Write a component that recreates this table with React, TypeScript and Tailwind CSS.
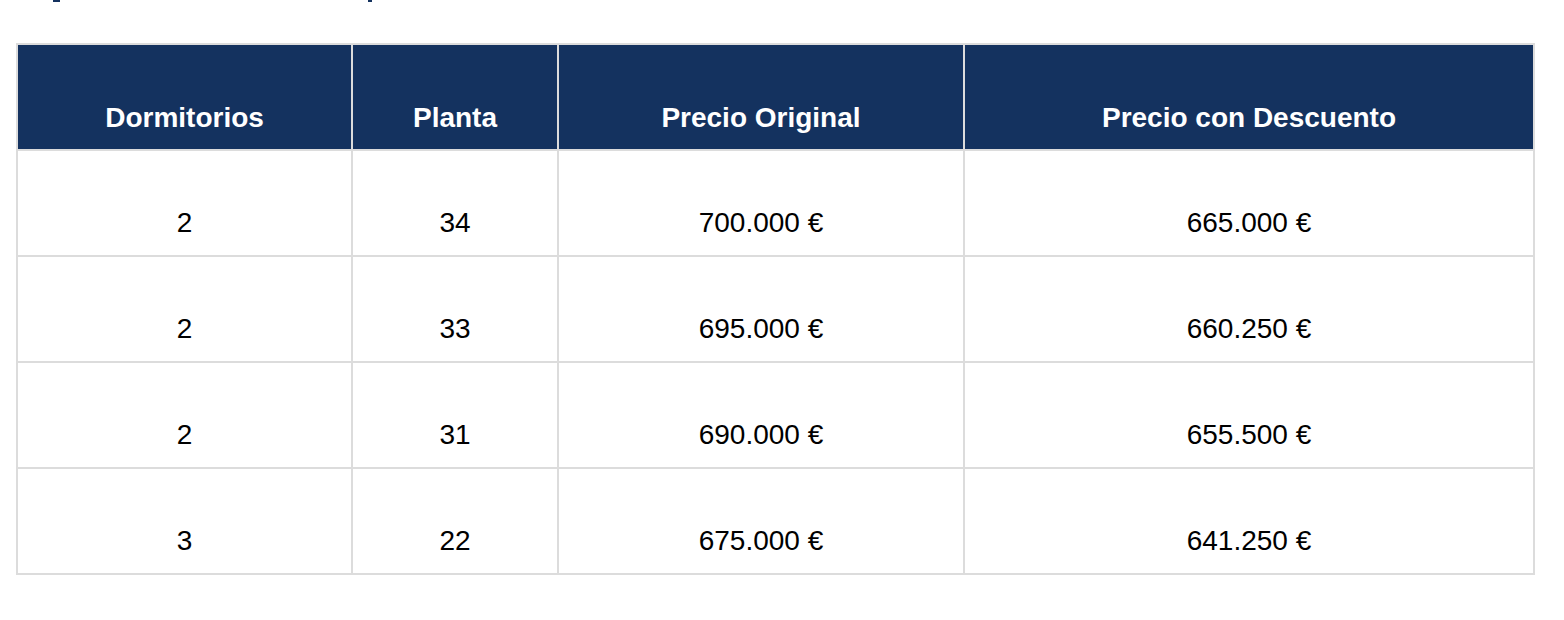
import React from "react";

const rows = [
  ["2", "34", "700.000 €", "665.000 €"],
  ["2", "33", "695.000 €", "660.250 €"],
  ["2", "31", "690.000 €", "655.500 €"],
  ["3", "22", "675.000 €", "641.250 €"],
];

const headers = ["Dormitorios", "Planta", "Precio Original", "Precio con Descuento"];

export default function App() {
  return (
    <div
      className="w-[1564px] h-[620px] bg-white overflow-hidden"
      style={{ fontFamily: '"Liberation Sans", Arial, sans-serif' }}
    >
      <div className="flex h-[2px]">
        <div className="ml-[53px] w-[7px] h-[2px] bg-[#14325f]" />
        <div className="ml-[308px] w-[4px] h-[2px] bg-[#14325f]" />
      </div>
      <div className="ml-[16px] mt-[41px] w-[1519px] bg-[#dcdcdc] p-[2px] grid grid-cols-[333px_204px_404px_568px] gap-[2px]">
        {headers.map((h) => (
          <div
            key={h}
            className="h-[104px] bg-[#14325f] flex items-end justify-center pb-[15px] text-white font-bold text-[28px] leading-[32px]"
          >
            {h}
          </div>
        ))}
        {rows.map((r, i) =>
          r.map((c, j) => (
            <div
              key={`${i}-${j}`}
              className="h-[104px] bg-white flex items-end justify-center pb-[16px] text-black text-[28px] leading-[32px]"
            >
              {c}
            </div>
          ))
        )}
      </div>
    </div>
  );
}
